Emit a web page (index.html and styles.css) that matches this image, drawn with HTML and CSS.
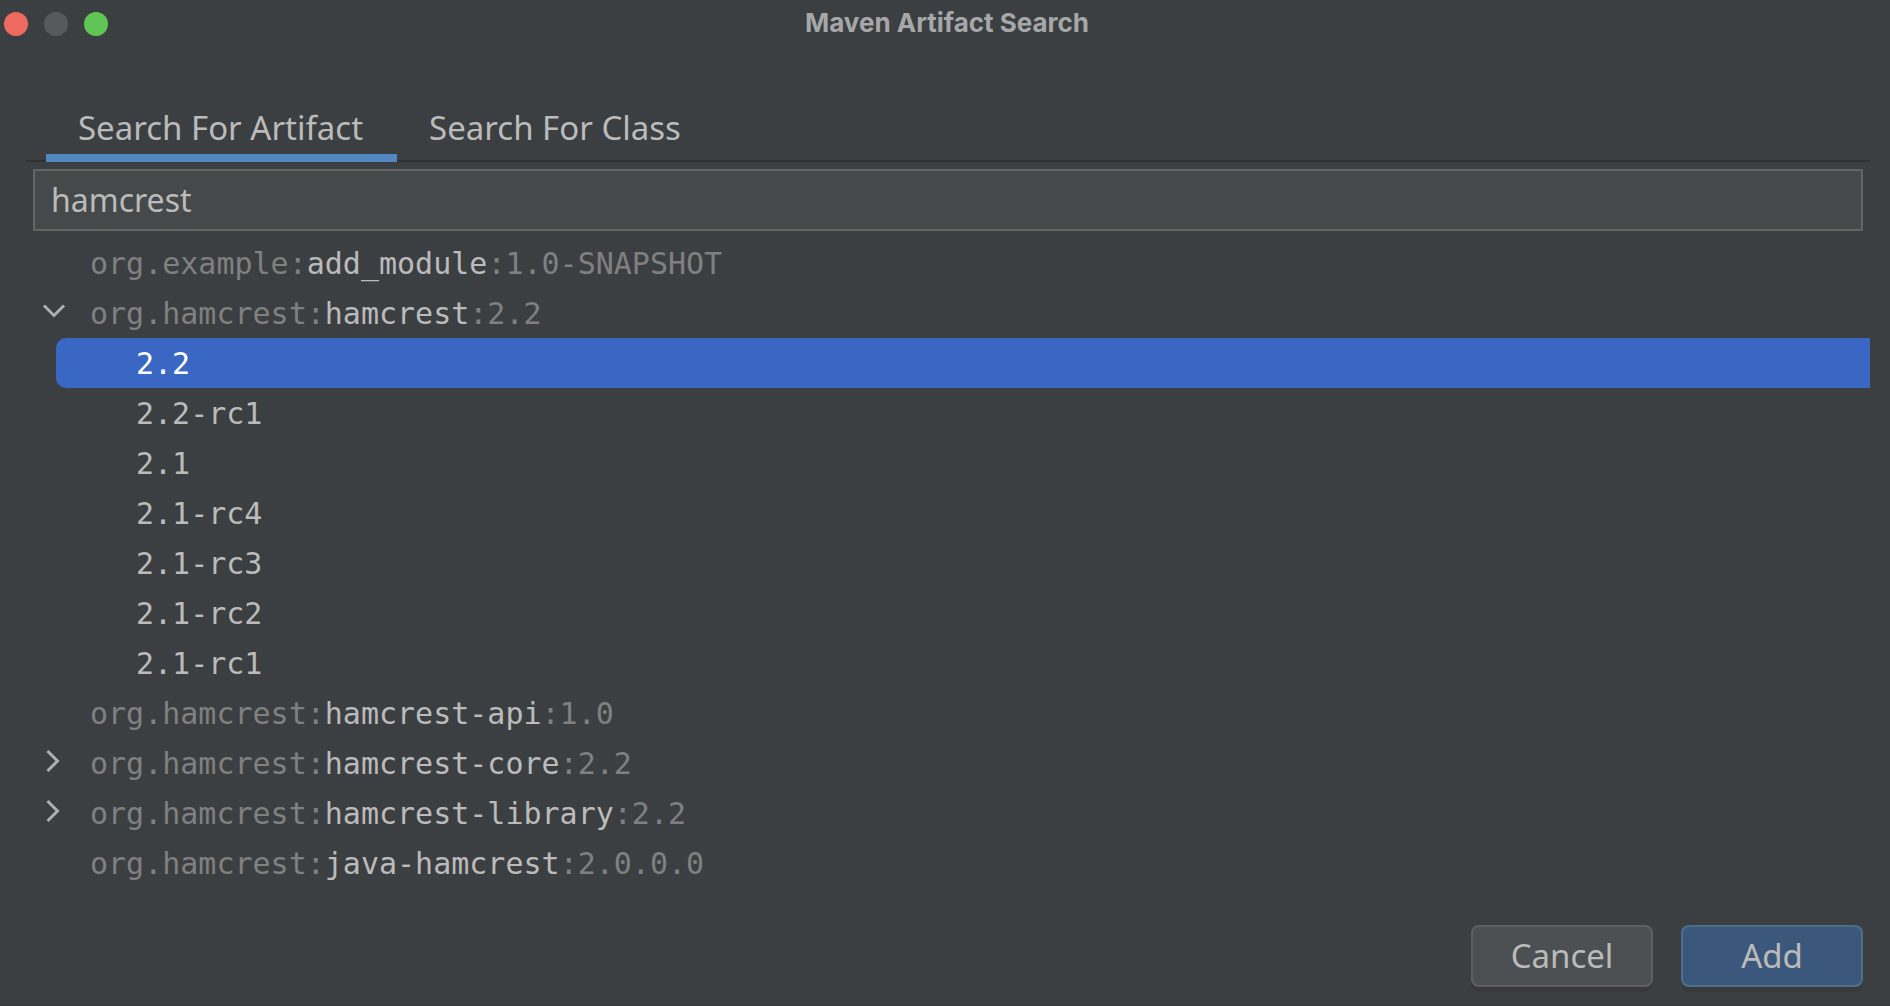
FILE: index.html
```html
<!DOCTYPE html>
<html lang="en">
<head>
    <meta charset="UTF-8">
    <meta name="viewport" content="width=device-width, initial-scale=1.0">
    <title>Maven Artifact Search</title>
    <link rel="stylesheet" href="styles.css">
</head>
<body>
    <div class="dialog">
        <header class="title-bar">
            <div class="window-controls">
                <button class="dot close" type="button" aria-label="Close"></button>
                <button class="dot minimize" type="button" aria-label="Minimize" disabled></button>
                <button class="dot zoom" type="button" aria-label="Zoom"></button>
            </div>
            <h1>Maven Artifact Search</h1>
        </header>

        <main class="content">
            <div class="tabs" role="tablist">
                <button class="tab active" type="button" role="tab" aria-selected="true">Search For Artifact</button>
                <button class="tab" type="button" role="tab" aria-selected="false">Search For Class</button>
            </div>

            <div class="search">
                <input class="search-input" type="text" value="hamcrest" aria-label="Artifact" spellcheck="false">
            </div>

            <ul class="tree">
                <li class="row">org.example:<b>add_module</b>:1.0-SNAPSHOT</li>
                <li class="row">
                    <button class="toggle" type="button" aria-label="Collapse org.hamcrest:hamcrest">
                        <svg width="24" height="24" viewBox="0 0 24 24"><path d="M2 6.5 L12 16.5 L22 6.5"/></svg>
                    </button>org.hamcrest:<b>hamcrest</b>:2.2
                </li>
                <li class="row version selected">2.2</li>
                <li class="row version">2.2-rc1</li>
                <li class="row version">2.1</li>
                <li class="row version">2.1-rc4</li>
                <li class="row version">2.1-rc3</li>
                <li class="row version">2.1-rc2</li>
                <li class="row version">2.1-rc1</li>
                <li class="row">org.hamcrest:<b>hamcrest-api</b>:1.0</li>
                <li class="row">
                    <button class="toggle" type="button" aria-label="Expand org.hamcrest:hamcrest-core">
                        <svg width="24" height="24" viewBox="0 0 24 24"><path d="M5.5 2 L15.5 12 L5.5 22"/></svg>
                    </button>org.hamcrest:<b>hamcrest-core</b>:2.2
                </li>
                <li class="row">
                    <button class="toggle" type="button" aria-label="Expand org.hamcrest:hamcrest-library">
                        <svg width="24" height="24" viewBox="0 0 24 24"><path d="M5.5 2 L15.5 12 L5.5 22"/></svg>
                    </button>org.hamcrest:<b>hamcrest-library</b>:2.2
                </li>
                <li class="row">org.hamcrest:<b>java-hamcrest</b>:2.0.0.0</li>
            </ul>
        </main>

        <footer class="actions">
            <button class="btn" type="button">Cancel</button>
            <button class="btn primary" type="button">Add</button>
        </footer>
    </div>
</body>
</html>
```
FILE: styles.css
```css
* {
    box-sizing: border-box;
}
body {
    margin: 0;
    background-color: #3c3f41;
    color: #bbbbbb;
    font-family: "Noto Sans", "Open Sans", sans-serif;
    font-size: 33px;
}
button,
input {
    font: inherit;
    color: inherit;
}
.dialog {
    display: flex;
    flex-direction: column;
    min-height: 100vh;
    border-bottom: 1px solid #37373a;
}

/* title bar */
.title-bar {
    display: grid;
    grid-template-columns: 1fr auto 1fr;
    align-items: center;
    height: 48px;
    padding-left: 4px;
}
.window-controls {
    display: flex;
    gap: 16px;
}
.dot {
    width: 24px;
    height: 24px;
    padding: 0;
    border: none;
    border-radius: 50%;
}
.dot.close {
    background-color: #ee6a5f;
}
.dot.minimize {
    background-color: #565a5c;
}
.dot.zoom {
    background-color: #61c554;
}
h1 {
    margin: 0;
    color: #a6a7a8;
    font-family: Inter, sans-serif;
    font-size: 26px;
    font-weight: 700;
    line-height: 46px;
    padding-bottom: 2px;
}

/* tabs */
.content {
    flex: 1;
    padding: 48px 20px 0 26px;
}
.tabs {
    display: flex;
    padding-left: 20px;
    box-shadow: inset 0 -2px #323232;
}
.tab {
    height: 66px;
    padding: 4px 34px 0 32px;
    border: none;
    border-bottom: 8px solid transparent;
    background: none;
}
.tab.active {
    border-bottom-color: #5487c0;
}

/* search field */
.search {
    padding: 7px;
}
.search-input {
    display: block;
    width: 100%;
    height: 62px;
    padding: 0 16px 2px;
    border: 2px solid #646464;
    background-color: #45494a;
    font-size: 32px;
    outline: none;
}

/* results */
.tree {
    margin: 0;
    padding: 0 0 0 30px;
    list-style: none;
    color: #808080;
    font-family: "DejaVu Sans Mono", monospace;
    font-size: 30px;
}
.row {
    position: relative;
    height: 50px;
    padding-left: 34px;
    line-height: 52px;
    white-space: nowrap;
}
.row b {
    color: #bbbbbb;
    font-weight: 400;
}
.row.version {
    padding-left: 80px;
    color: #bbbbbb;
}
.row.selected {
    border-radius: 10px 0 0 10px;
    background-color: #3a66c4;
    color: #ffffff;
}
.toggle {
    position: absolute;
    left: -14px;
    top: 11px;
    width: 24px;
    height: 24px;
    padding: 0;
    border: none;
    background: none;
}
.toggle svg {
    display: block;
    fill: none;
    stroke: #adafb1;
    stroke-width: 3;
}

/* buttons */
.actions {
    display: flex;
    justify-content: flex-end;
    gap: 28px;
    padding: 20px 27px 18px;
}
.btn {
    width: 182px;
    height: 62px;
    padding: 0 0 2px;
    border: 2px solid #5e6060;
    border-radius: 8px;
    background-color: #4c5052;
    box-shadow: 0 5px #38393a;
}
.btn.primary {
    border-color: #4c708c;
    background-color: #3b587c;
}
```
